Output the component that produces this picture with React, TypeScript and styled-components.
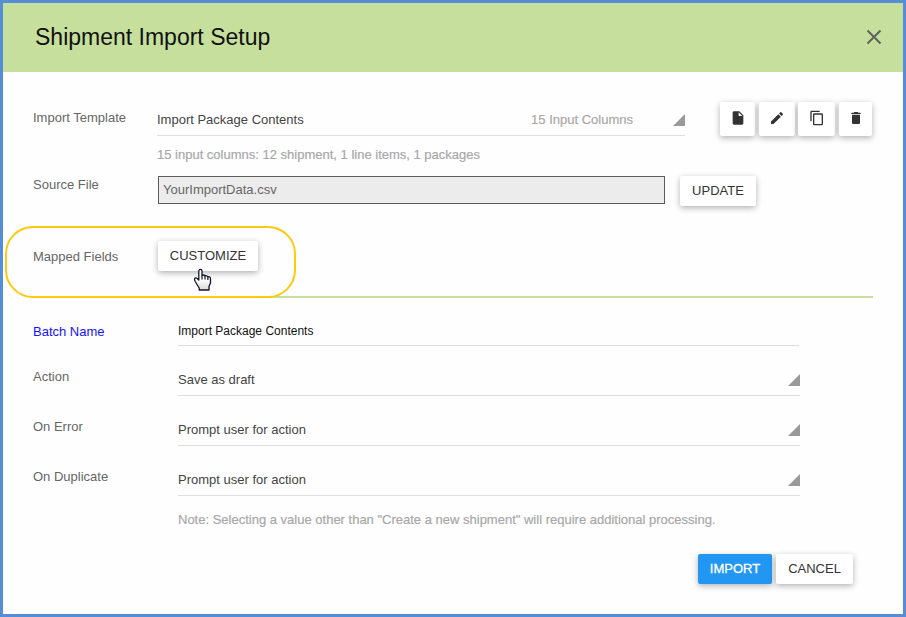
import React from "react";
import styled, { createGlobalStyle, css } from "styled-components";

const GlobalStyle = createGlobalStyle`
  * { box-sizing: border-box; }
  body { margin: 0; background: #fff; font-family: "Liberation Sans", Arial, sans-serif; }
`;

const Dialog = styled.main`
  width: 906px;
  height: 617px;
  border: 3px solid #558ed5;
  background: #fefefe;
  font-size: 13px;
  line-height: 20px;
  color: #666;
`;

const Header = styled.header`
  height: 69px;
  padding: 0 21px 2px 32px;
  display: flex;
  align-items: center;
  justify-content: space-between;
  background: #c6df9c;
`;

const Title = styled.h1`
  margin: 0;
  font-size: 23px;
  line-height: 32px;
  font-weight: 400;
  color: #111;
`;

const CloseButton = styled.button`
  width: 16px;
  height: 16px;
  padding: 0;
  border: 0;
  background: none;
  display: flex;
`;

const Body = styled.div`
  padding: 29px 30px 0;
`;

const Row = styled.div<{ $h: number; $label?: number }>`
  display: grid;
  grid-template-columns: ${(p) => p.$label ?? 124}px 1fr;
  height: ${(p) => p.$h}px;
`;

const Label = styled.label<{ $top: number; $active?: boolean }>`
  padding-top: ${(p) => p.$top}px;
  color: ${(p) => (p.$active ? "#1414f5" : "#666")};
`;

const Controls = styled.div<{ $indent?: number }>`
  display: flex;
  align-items: flex-start;
  padding-left: ${(p) => p.$indent ?? 0}px;
`;

const Select = styled.div<{ $w: number; $h: number; $bottom?: number }>`
  width: ${(p) => p.$w}px;
  height: ${(p) => p.$h}px;
  display: flex;
  align-items: flex-end;
  padding-bottom: ${(p) => p.$bottom ?? 5}px;
  border-bottom: 1px solid #dedede;
  color: #444;
`;

const Value = styled.span<{ $small?: boolean }>`
  flex: 1;
  ${(p) =>
    p.$small &&
    css`
      font-size: 12px;
      color: #111;
    `}
`;

const Count = styled.span`
  margin-right: 40px;
  color: #a8a8a8;
  -webkit-text-stroke: 0.2px #a8a8a8;
`;

const Corner = styled.i`
  width: 12px;
  height: 12px;
  margin-bottom: 4px;
  background: #999;
  clip-path: polygon(100% 0, 100% 100%, 0 100%);
`;

const Hint = styled.p<{ $left: number; $h: number; $top: number }>`
  margin: 0;
  height: ${(p) => p.$h}px;
  padding: ${(p) => p.$top}px 0 0 ${(p) => p.$left}px;
  color: #a8a8a8;
  -webkit-text-stroke: 0.2px #a8a8a8;
`;

const IconGroup = styled.div`
  display: flex;
  margin: 1px 0 0 35px;
`;

const raised = css`
  border: 0;
  border-radius: 2px;
  background: #fff;
  box-shadow: 0 2px 6px rgba(0, 0, 0, 0.3);
`;

const IconButton = styled.button<{ $w: number; $gap: number }>`
  ${raised}
  width: ${(p) => p.$w}px;
  height: 34px;
  margin-right: ${(p) => p.$gap}px;
  padding: 0 0 2px;
  display: flex;
  align-items: center;
  justify-content: center;
`;

const Button = styled.button<{ $w: number; $primary?: boolean }>`
  ${raised}
  width: ${(p) => p.$w}px;
  height: 30px;
  padding: 0;
  font: 400 13px/30px "Liberation Sans", Arial, sans-serif;
  white-space: nowrap;
  color: #333;
  ${(p) =>
    p.$primary &&
    css`
      background: #2196f3;
      color: #fff;
      -webkit-text-stroke: 0.3px #fff;
    `}
`;

const FileField = styled.div`
  width: 507px;
  height: 28px;
  margin-right: 15px;
  padding: 3px 4px;
  border: 1px solid #5b5b5b;
  background: #ececec;
`;

const Mapped = styled.section`
  position: relative;
  height: 57px;
  border-bottom: 2px solid #c6df9c;
`;

const Highlight = styled.div`
  position: absolute;
  left: -28px;
  top: -15px;
  width: 291px;
  height: 72px;
  border: 2px solid #ffc90e;
  border-radius: 28px;
  pointer-events: none;
`;

const Cursor = styled.svg`
  position: absolute;
  left: 160px;
  top: 27px;
`;

const Footer = styled.footer`
  display: flex;
  justify-content: flex-end;
  gap: 4px;
  padding-right: 20px;
`;

const icons = [
  { w: 35, gap: 4, name: "New template", d: "M6 2c-1.1 0-2 .9-2 2v16c0 1.1.9 2 2 2h12c1.1 0 2-.9 2-2V8l-6-6H6zm7 7V3.5L18.5 9H13z" },
  { w: 36, gap: 3, name: "Edit template", d: "M3 17.25V21h3.75L17.81 9.94l-3.75-3.75L3 17.25zM20.71 7.04a1 1 0 0 0 0-1.41l-2.34-2.34a1 1 0 0 0-1.41 0l-1.83 1.83 3.75 3.75 1.83-1.83z" },
  { w: 37, gap: 4, name: "Copy template", d: "M16 1H4c-1.1 0-2 .9-2 2v14h2V3h12V1zm3 4H8c-1.1 0-2 .9-2 2v14c0 1.1.9 2 2 2h11c1.1 0 2-.9 2-2V7c0-1.1-.9-2-2-2zm0 16H8V7h11v14z" },
  { w: 33, gap: 0, name: "Delete template", d: "M6 19c0 1.1.9 2 2 2h8c1.1 0 2-.9 2-2V7H6v12zM19 4h-3.500l-1-1h-5l-1 1H5v2h14V4z" },
];

const choices = [
  { label: "Action", value: "Save as draft" },
  { label: "On Error", value: "Prompt user for action" },
  { label: "On Duplicate", value: "Prompt user for action" },
];

export default function App() {
  return (
    <>
      <GlobalStyle />
      <Dialog>
        <Header>
          <Title>Shipment Import Setup</Title>
          <CloseButton aria-label="Close">
            <svg width="16" height="16" viewBox="0 0 16 16">
              <path d="M1.500 1.500l13 13M14.500 1.500l-13 13" stroke="#5f635b" strokeWidth="2" />
            </svg>
          </CloseButton>
        </Header>
        <Body>
          <Row $h={43}>
            <Label $top={7}>Import Template</Label>
            <Controls>
              <Select $w={528} $h={35}>
                <Value>Import Package Contents</Value>
                <Count>15 Input Columns</Count>
                <Corner />
              </Select>
              <IconGroup>
                {icons.map((icon) => (
                  <IconButton key={icon.name} $w={icon.w} $gap={icon.gap} aria-label={icon.name}>
                    <svg width="16" height="16" viewBox="0 0 24 24" fill="#333">
                      <path d={icon.d} />
                    </svg>
                  </IconButton>
                ))}
              </IconGroup>
            </Controls>
          </Row>
          <Hint $left={124} $h={31} $top={1}>
            15 input columns: 12 shipment, 1 line items, 1 packages
          </Hint>
          <Row $h={66}>
            <Label $top={0}>Source File</Label>
            <Controls $indent={1}>
              <FileRow>
                <FileField>YourImportData.csv</FileField>
                <Button $w={76}>UPDATE</Button>
              </FileRow>
            </Controls>
          </Row>
          <Mapped>
            <Row $h={30}>
              <Label $top={6}>Mapped Fields</Label>
              <Controls $indent={1}>
                <Button $w={100}>CUSTOMIZE</Button>
              </Controls>
            </Row>
            <Highlight />
            <Cursor width="20" height="24" viewBox="0 0 20 24">
              <defs>
                <linearGradient id="hand" x1="0" y1="0" x2="0" y2="1">
                  <stop offset="0.5" stopColor="#fff" />
                  <stop offset="1" stopColor="#d8d8d8" />
                </linearGradient>
              </defs>
              <path
                d="M5.800 12V3a1.600 1.600 0 0 1 3.200 0V7.500Q10.500 6.300 12 7.800Q13.800 7 14.800 8.800Q17.400 8.200 17.500 10.800V15L16 18.500V22H6.200V20L2.200 13.500C.8 11 1.800 9.300 3.500 10Z"
                fill="url(#hand)"
                stroke="#11132a"
                strokeWidth="1.300"
                strokeLinejoin="round"
              />
              <path d="M9 7.500v4M12 8v3.500M14.900 9v3" stroke="#11132a" strokeWidth="1.200" />
            </Cursor>
          </Mapped>
          <Row $h={48} $label={145}>
            <Label $top={24} $active>Batch Name</Label>
            <Controls>
              <Select $w={621} $h={48} $bottom={4}>
                <Value $small>Import Package Contents</Value>
              </Select>
            </Controls>
          </Row>
          {choices.map((c) => (
            <Row key={c.label} $h={50} $label={145}>
              <Label $top={21}>{c.label}</Label>
              <Controls>
                <Select $w={622} $h={50}>
                  <Value>{c.value}</Value>
                  <Corner />
                </Select>
              </Controls>
            </Row>
          ))}
          <Hint $left={145} $h={58} $top={14}>
            Note: Selecting a value other than "Create a new shipment" will require additional processing.
          </Hint>
          <Footer>
            <Button $w={74} $primary>IMPORT</Button>
            <Button $w={77}>CANCEL</Button>
          </Footer>
        </Body>
      </Dialog>
    </>
  );
}

const FileRow = styled.div`
  display: flex;
  padding-top: 1px;
`;
